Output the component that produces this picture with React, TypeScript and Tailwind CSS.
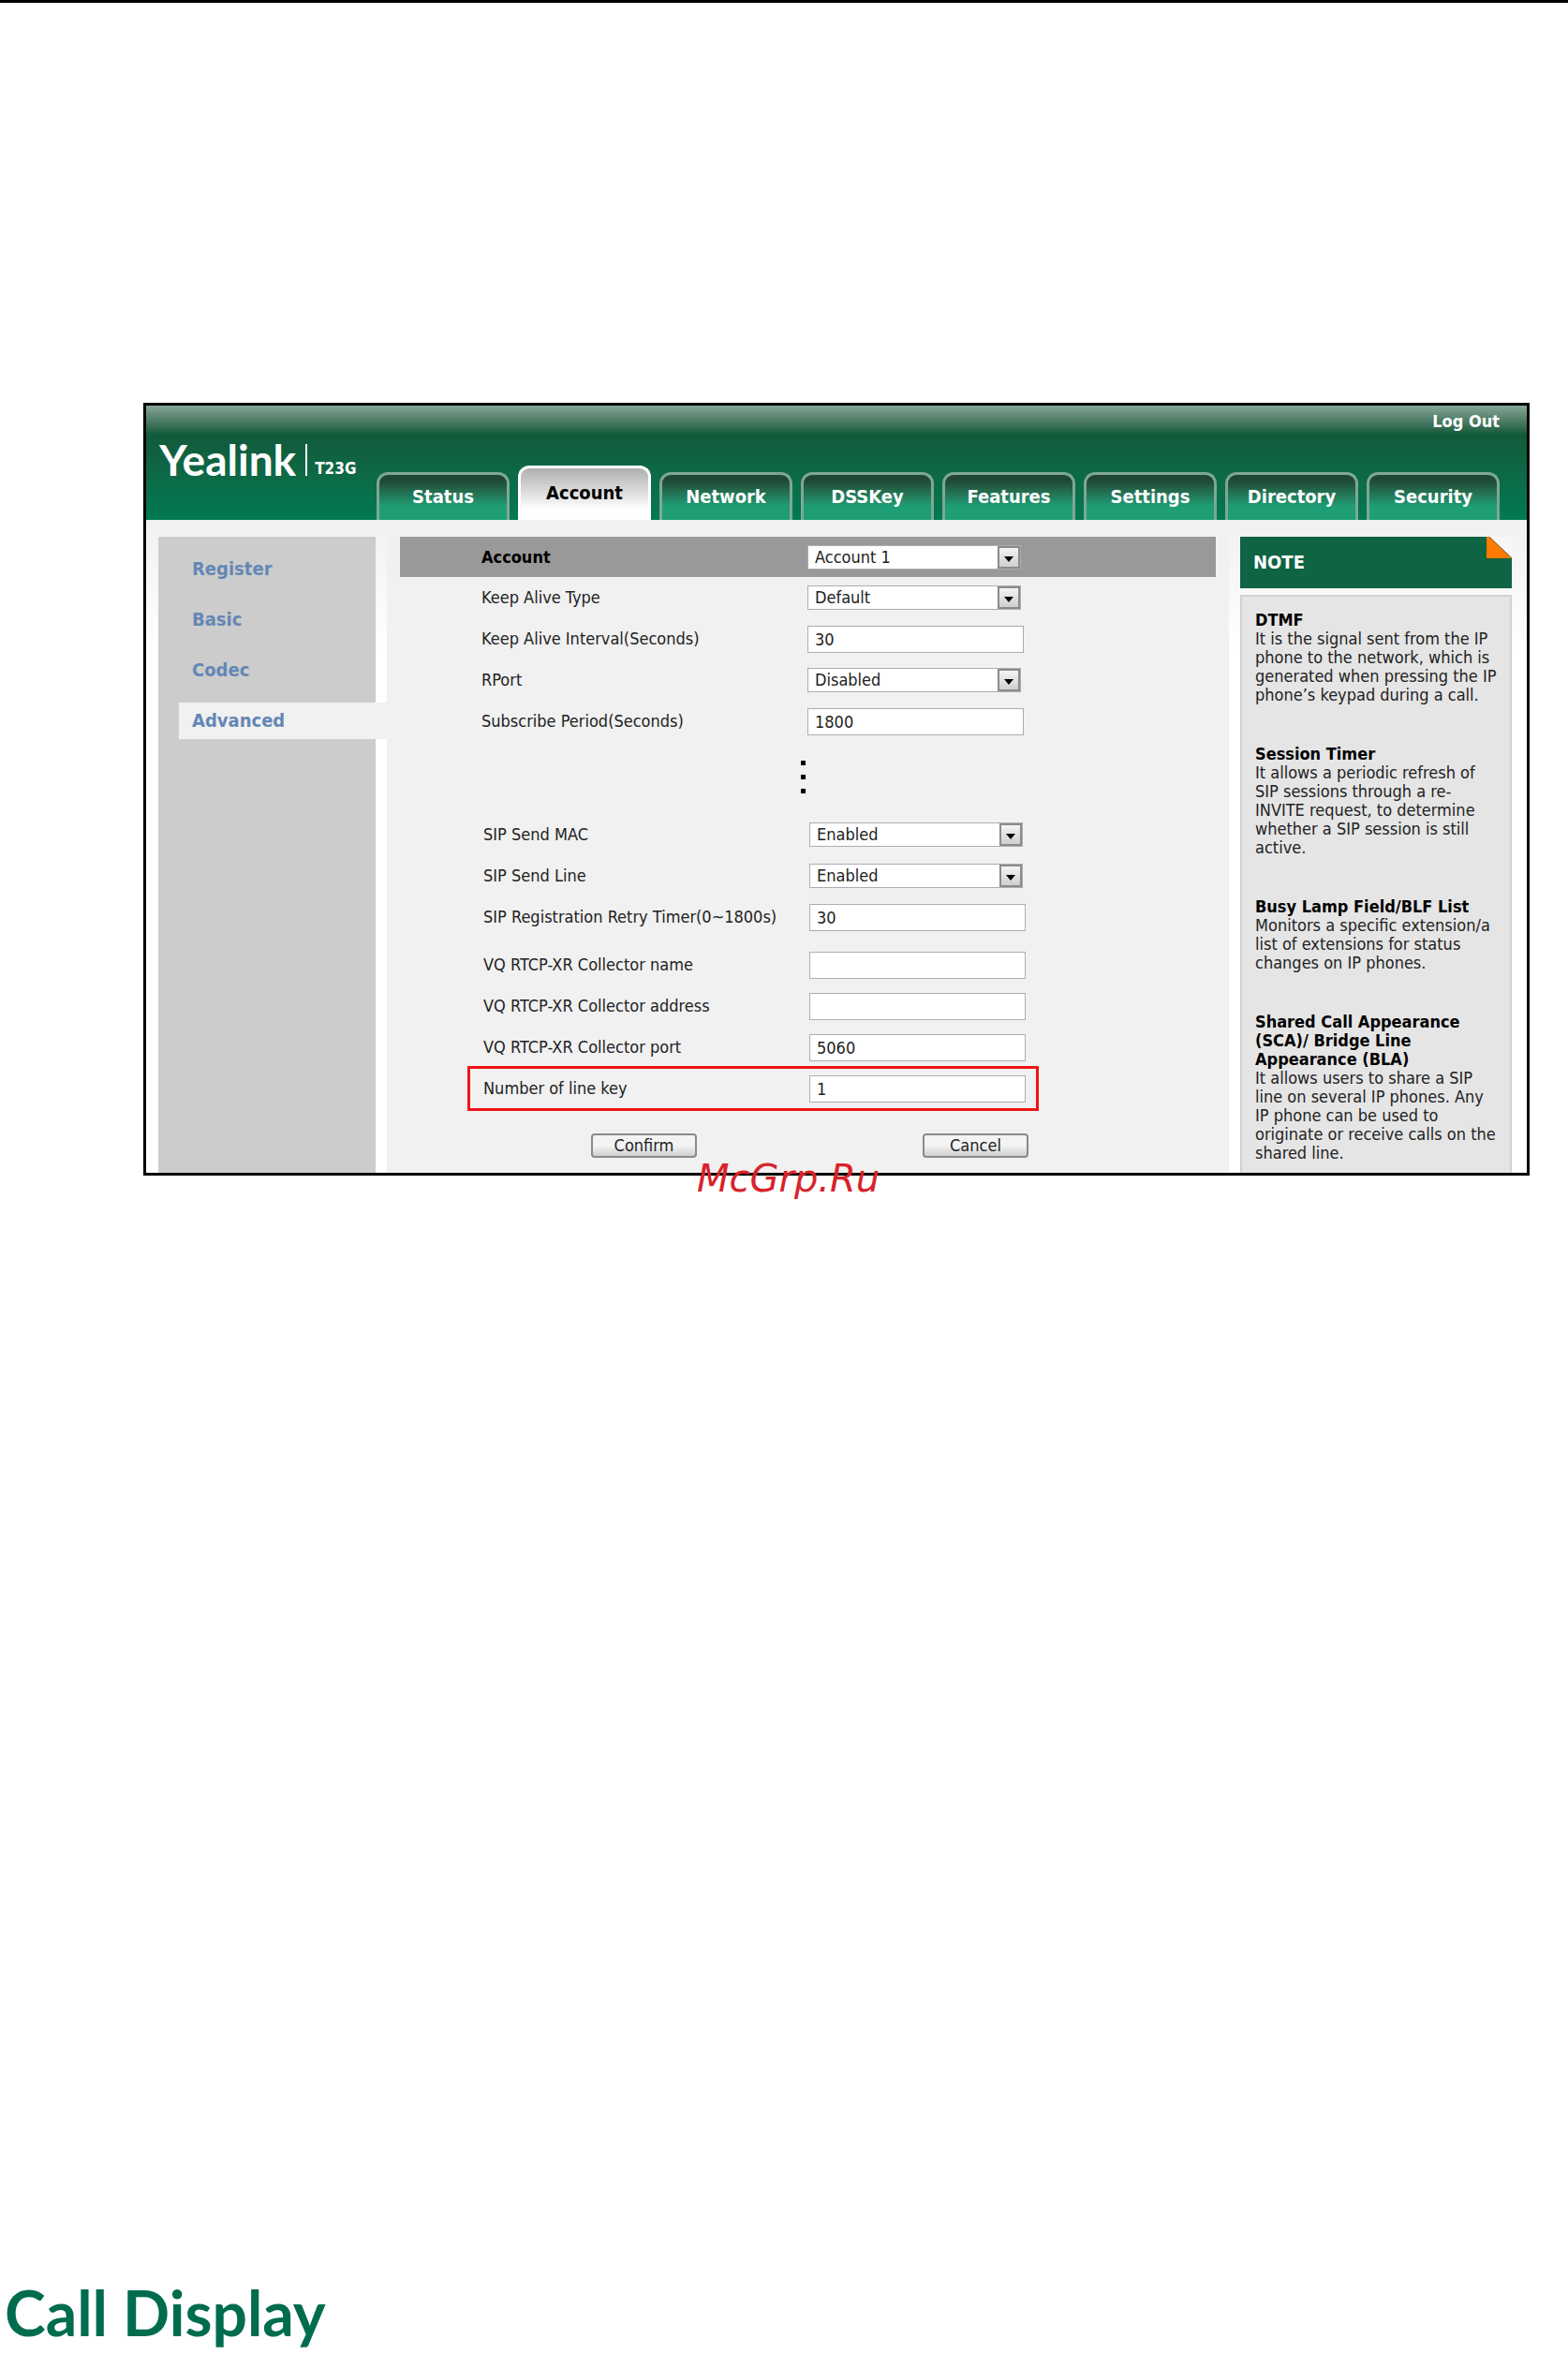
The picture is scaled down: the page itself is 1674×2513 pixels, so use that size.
import { useState } from "react";
import { clsx } from "clsx";

type FieldRow = {
  id: string;
  label: string;
  value: string;
  options?: string[];
};

const tabs = ["Status", "Account", "Network", "DSSKey", "Features", "Settings", "Directory", "Security"];
const menu = ["Register", "Basic", "Codec", "Advanced"];

const topRows: FieldRow[] = [
  { id: "keep-alive-type", label: "Keep Alive Type", value: "Default", options: ["Default", "Options", "Notify", "Disabled"] },
  { id: "keep-alive-interval", label: "Keep Alive Interval(Seconds)", value: "30" },
  { id: "rport", label: "RPort", value: "Disabled", options: ["Disabled", "Enabled"] },
  { id: "subscribe-period", label: "Subscribe Period(Seconds)", value: "1800" },
];

const sipRows: FieldRow[] = [
  { id: "sip-send-mac", label: "SIP Send MAC", value: "Enabled", options: ["Enabled", "Disabled"] },
  { id: "sip-send-line", label: "SIP Send Line", value: "Enabled", options: ["Enabled", "Disabled"] },
  { id: "sip-retry-timer", label: "SIP Registration Retry Timer(0~1800s)", value: "30" },
];

const collectorRows: FieldRow[] = [
  { id: "collector-name", label: "VQ RTCP-XR Collector name", value: "" },
  { id: "collector-address", label: "VQ RTCP-XR Collector address", value: "" },
  { id: "collector-port", label: "VQ RTCP-XR Collector port", value: "5060" },
];

const notes = [
  {
    title: "DTMF",
    lines: ["It is the signal sent from the IP", "phone to the network, which is", "generated when pressing the IP", "phone’s keypad during a call."],
  },
  {
    title: "Session Timer",
    lines: ["It allows a periodic refresh of", "SIP sessions through a re-", "INVITE request, to determine", "whether a SIP session is still", "active."],
  },
  {
    title: "Busy Lamp Field/BLF List",
    lines: ["Monitors a specific extension/a", "list of extensions for status", "changes on IP phones."],
  },
  {
    title: "Shared Call Appearance\n(SCA)/ Bridge Line\nAppearance (BLA)",
    lines: ["It allows users to share a SIP", "line on several IP phones. Any", "IP phone can be used to", "originate or receive calls on the", "shared line."],
  },
];

const SelectBox = ({ id, value, options }: { id: string; value: string; options: string[] }) => {
  const [current, setCurrent] = useState(value);

  return (
    <div className="relative w-[228px]">
      <select
        id={id}
        value={current}
        onChange={(e) => setCurrent(e.target.value)}
        className="block h-[26px] w-full appearance-none border border-[#abadb3] bg-white pl-[7px] pr-7 leading-[24px] text-[#222]"
      >
        {options.map((option) => (
          <option key={option}>{option}</option>
        ))}
      </select>
      <span className="pointer-events-none absolute right-px top-px flex h-6 w-6 items-center justify-center border-2 border-[#8b8b8b] bg-linear-to-b from-[#f4f4f4] to-[#cfcfcf]">
        <svg viewBox="0 0 10 6" className="mt-1 h-[6px] w-[10px]">
          <path d="M0 0h10L5 6z" fill="#000" />
        </svg>
      </span>
    </div>
  );
};

const Field = ({ row }: { row: FieldRow }) =>
  row.options ? (
    <SelectBox id={row.id} value={row.value} options={row.options} />
  ) : (
    <input
      id={row.id}
      type="text"
      defaultValue={row.value}
      className="h-[29px] w-[231px] border border-[#abadb3] bg-white pl-[7px] text-[#222]"
    />
  );

const Row = ({ row }: { row: FieldRow }) => (
  <div className="flex h-11 shrink-0 items-center">
    <label htmlFor={row.id} className="w-[348px] shrink-0 whitespace-nowrap">
      {row.label}
    </label>
    <Field row={row} />
  </div>
);

const Header = () => (
  <header className="flex h-[122px] bg-linear-to-b from-[#86a698] via-[#125a3b] via-25% to-[#007a52]">
    <div className="flex w-[246px] shrink-0 items-end self-start pl-[14px] pt-[37px]">
      <span className="font-[Lato,sans-serif] text-[46px] font-bold leading-[42px] text-white">Yealink</span>
      <span className="mb-1 ml-[10px] h-[34px] w-[2px] bg-white" />
      <span className="ml-2 text-[17px] font-bold leading-6 text-white">T23G</span>
    </div>
    <div className="flex flex-1 flex-col pr-[29px]">
      <a href="#logout" className="mt-[5px] self-end text-lg font-bold leading-6 text-white">
        Log Out
      </a>
      <nav className="mt-auto flex items-end gap-[9px]">
        {tabs.map((tab) => (
          <a
            key={tab}
            href={`#${tab.toLowerCase()}`}
            className={clsx(
              "flex-1 rounded-t-xl border-[3px] border-b-0 text-center text-xl font-bold",
              tab === "Account"
                ? "h-[58px] border-white bg-linear-to-b from-[#b0b0b0] to-white to-80% leading-[53px] text-black"
                : "h-[51px] border-[#7fa796] bg-linear-to-b from-[#1f4733] from-10% to-[#1e9e75] to-70% leading-[46px] text-white",
            )}
          >
            {tab}
          </a>
        ))}
      </nav>
    </div>
  </header>
);

const Sidebar = () => (
  <aside className="w-[244px] shrink-0 bg-linear-to-r from-[#ccc] from-95% to-transparent to-95% pt-[15px]">
    <ul className="flex flex-col gap-[15px]">
      {menu.map((item) => (
        <li key={item} className={clsx("ml-[22px]", item === "Advanced" && "bg-[#f1f1f1]")}>
          <a href={`#${item.toLowerCase()}`} className="block pl-[14px] text-xl font-bold leading-[39px] text-[#6487b5]">
            {item}
          </a>
        </li>
      ))}
    </ul>
  </aside>
);

const AccountForm = () => (
  <form className="min-w-0 flex-1 bg-[#f1f1f1] px-[14px] text-lg text-[#222]" onSubmit={(e) => e.preventDefault()}>
    <div className="flex h-[43px] items-center bg-[#999] pl-[87px]">
      <label htmlFor="account" className="w-[348px] shrink-0 font-bold text-black">
        Account
      </label>
      <SelectBox id="account" value="Account 1" options={["Account 1", "Account 2", "Account 3"]} />
    </div>
    <div className="pl-[87px]">
      {topRows.map((row) => (
        <Row key={row.id} row={row} />
      ))}
    </div>
    <div className="flex flex-col gap-[10px] pb-[22px] pl-[428px] pt-5">
      <span className="size-[5px] bg-black" />
      <span className="size-[5px] bg-black" />
      <span className="size-[5px] bg-black" />
    </div>
    <div className="pl-[89px]">
      {sipRows.map((row) => (
        <Row key={row.id} row={row} />
      ))}
    </div>
    <div className="pl-[89px] pt-[7px]">
      {collectorRows.map((row) => (
        <Row key={row.id} row={row} />
      ))}
    </div>
    <div className="-mt-[2px] ml-[72px] flex h-12 w-[610px] items-center border-[3px] border-[#f01414] pl-[14px]">
      <Row row={{ id: "line-keys", label: "Number of line key", value: "1" }} />
    </div>
    <div className="flex gap-[241px] pb-4 pl-[204px] pt-6">
      {["Confirm", "Cancel"].map((label) => (
        <button
          key={label}
          type="submit"
          className="h-[26px] w-[113px] rounded-[4px] border-2 border-[#8a8a8a] bg-linear-to-b from-[#f3f3f3] from-50% to-[#d0d0d0] leading-[22px]"
        >
          {label}
        </button>
      ))}
    </div>
  </form>
);

const NotePanel = () => (
  <aside className="ml-3 mr-4 flex w-[290px] shrink-0 flex-col">
    <div className="flex h-[55px] justify-between bg-[#0e6443] pl-[14px]">
      <h2 className="text-xl font-bold leading-[54px] text-white">NOTE</h2>
      <svg viewBox="0 0 28 24" className="h-6 w-7">
        <path d="M4 0h24v23z" fill="#f7f7f7" />
        <path d="M1 0h3l24 23H1z" fill="#ff7a00" />
        <path d="M4 0l24 23" stroke="#7a5a3a" fill="none" />
      </svg>
    </div>
    <div className="mt-[7px] flex flex-1 flex-col gap-[43px] border-2 border-b-0 border-[#d2d2d2] bg-[#e5e5e5] pl-[14px] pt-[15px] text-lg leading-[20px] text-[#222]">
      {notes.map((note) => (
        <section key={note.title}>
          <h3 className="whitespace-pre-line font-bold text-black">{note.title}</h3>
          <p className="whitespace-pre">{note.lines.join("\n")}</p>
        </section>
      ))}
    </div>
  </aside>
);

const App = () => (
  <div className="border-t-[3px] border-black bg-white font-['DejaVu_Sans_Condensed','DejaVu_Sans',sans-serif] text-lg">
    <div className="relative ml-[153px] mr-[41px] mt-[427px] border-[3px] border-black">
      <Header />
      <div className="flex bg-linear-to-b from-[#f1f1f1] to-white to-20% pl-[13px] pt-[18px]">
        <Sidebar />
        <AccountForm />
        <NotePanel />
      </div>
      <span className="absolute -bottom-[30px] left-[588px] font-['DejaVu_Sans',sans-serif] text-[40px] italic leading-[48px] text-[#d8232a]">
        McGrp.Ru
      </span>
    </div>
    <h1 className="mt-[1175px] pl-[5px] font-[Lato,sans-serif] text-[66px] font-bold leading-[78px] text-[#006c4e]">
      Call Display
    </h1>
  </div>
);

export default App;
